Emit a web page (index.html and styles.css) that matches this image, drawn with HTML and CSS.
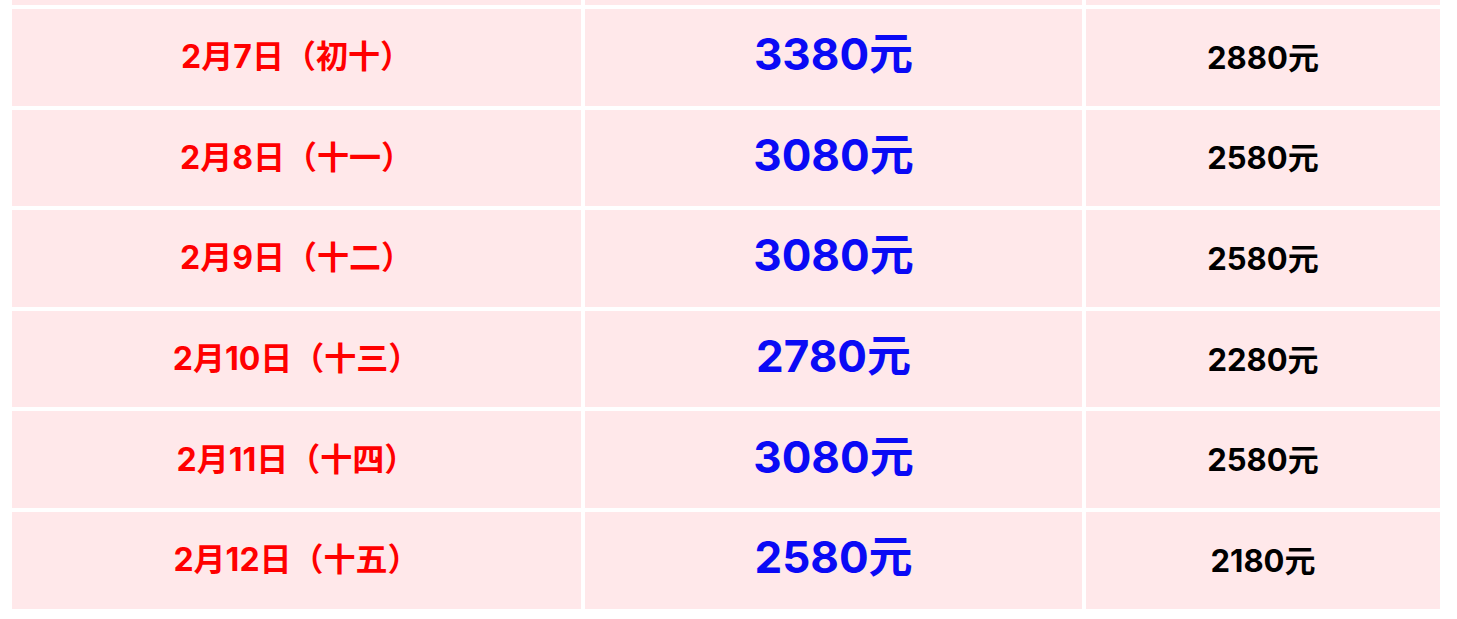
FILE: index.html
```html
<!DOCTYPE html>
<html lang="zh-CN">
<head>
<meta charset="utf-8">
<title>价格表</title>
<link rel="stylesheet" href="styles.css">
</head>
<body>
<table class="price-table">
  <colgroup>
    <col class="c-date">
    <col class="c-price">
    <col class="c-child">
  </colgroup>
  <tbody>
    <tr class="row-cut"><td></td><td></td><td></td></tr>
    <tr><td class="date">2月7日（初十）</td><td class="price">3380元</td><td class="child">2880元</td></tr>
    <tr><td class="date">2月8日（十一）</td><td class="price">3080元</td><td class="child">2580元</td></tr>
    <tr><td class="date">2月9日（十二）</td><td class="price">3080元</td><td class="child">2580元</td></tr>
    <tr><td class="date">2月10日（十三）</td><td class="price">2780元</td><td class="child">2280元</td></tr>
    <tr><td class="date">2月11日（十四）</td><td class="price">3080元</td><td class="child">2580元</td></tr>
    <tr><td class="date">2月12日（十五）</td><td class="price">2580元</td><td class="child">2180元</td></tr>
  </tbody>
</table>
</body>
</html>
```

FILE: styles.css
```css
html, body {
  background: #ffffff;
}
body {
  margin: 0 8px;
  font-family: "Inter", "Noto Sans CJK JP", sans-serif;
  font-weight: bold;
  text-spacing-trim: space-all;
}
.price-table {
  width: 1436px;
  margin-top: -4px;
  border-collapse: separate;
  border-spacing: 4px;
  table-layout: fixed;
}
.c-date { width: 569px; }
.c-price { width: 497px; }
.c-child { width: 354px; }
.price-table td {
  box-sizing: border-box;
  background: #ffe8ea;
  padding: 0;
  height: 96.6px;
  line-height: 1;
  text-align: center;
  vertical-align: middle;
  white-space: nowrap;
}
.price-table .row-cut td {
  height: 5px;
}
.price-table .date {
  color: #ff0000;
  font-size: 32px;
  font-feature-settings: "locl" 0;
  padding-bottom: 0;
}
.price-table .price {
  color: #0a0af5;
  font-size: 44px;
  padding-bottom: 6px;
}
.price-table .child {
  color: #000000;
  font-size: 31px;
  padding-bottom: 0;
}
```
